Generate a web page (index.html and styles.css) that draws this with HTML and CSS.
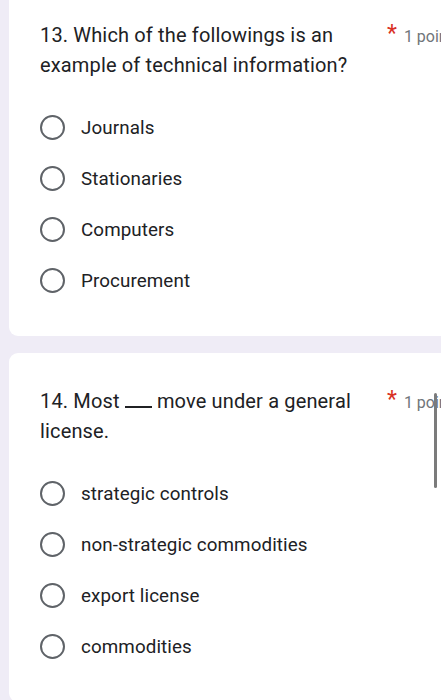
FILE: index.html
```html
<!DOCTYPE html>
<html lang="en">
<head>
<meta charset="utf-8">
<title>Quiz</title>
<link rel="stylesheet" href="styles.css">
</head>
<body>
<main class="form">
  <section class="card card-first">
    <div class="q-head">
      <div class="q-title">13. Which of the followings is an example of technical information?</div>
      <span class="req">*</span>
      <span class="points">1 point</span>
    </div>
    <ul class="options">
      <li class="option"><span class="radio"></span><span class="label">Journals</span></li>
      <li class="option"><span class="radio"></span><span class="label">Stationaries</span></li>
      <li class="option"><span class="radio"></span><span class="label">Computers</span></li>
      <li class="option"><span class="radio"></span><span class="label">Procurement</span></li>
    </ul>
  </section>
  <section class="card">
    <div class="q-head">
      <div class="q-title">14. Most <span class="blank" aria-label="blank"></span> move under a general license.</div>
      <span class="req">*</span>
      <span class="points">1 point</span>
    </div>
    <ul class="options">
      <li class="option"><span class="radio"></span><span class="label">strategic controls</span></li>
      <li class="option"><span class="radio"></span><span class="label">non-strategic commodities</span></li>
      <li class="option"><span class="radio"></span><span class="label">export license</span></li>
      <li class="option"><span class="radio"></span><span class="label">commodities</span></li>
    </ul>
  </section>
</main>
<div class="scrollbar"></div>
</body>
</html>
```
FILE: styles.css
```css
html, body {
  margin: 0;
  padding: 0;
  overflow: hidden;
}
body {
  background: #efecf6;
  font-family: Roboto, "Liberation Sans", sans-serif;
  color: #202124;
  width: 441px;
  height: 700px;
}
.form {
  display: flex;
  flex-direction: column;
  gap: 17px;
  padding-left: 9px;
}
.card {
  background: #ffffff;
  margin-right: -30px;
  border-radius: 9px;
  padding: 33px 0 30px 31px;
}
.card-first {
  padding-top: 20px;
  border-radius: 0 0 9px 9px;
}
.q-head {
  display: flex;
  align-items: baseline;
}
.q-title {
  width: 330px;
  flex: 0 0 330px;
  font-size: 20px;
  line-height: 30px;
  letter-spacing: 0.15px;
}
.blank {
  display: inline-block;
  width: 27px;
  height: 2px;
  background: #202124;
  vertical-align: baseline;
}
.req {
  margin-left: 17px;
  color: #d93025;
  font-size: 23px;
  position: relative;
  top: -1px;
}
.points {
  margin-left: 7px;
  color: #70757a;
  font-size: 16px;
  white-space: nowrap;
}
.options {
  list-style: none;
  margin: 22px 0 0 0;
  padding: 0;
  display: flex;
  flex-direction: column;
}
.option {
  display: flex;
  align-items: center;
  height: 51px;
}
.radio {
  box-sizing: border-box;
  width: 25px;
  height: 25px;
  border: 2.5px solid #5f6368;
  border-radius: 50%;
  flex: 0 0 25px;
}
.label {
  margin-left: 16px;
  font-size: 18.8px;
  letter-spacing: 0.1px;
}
.scrollbar {
  position: fixed;
  left: 434px;
  top: 393px;
  width: 3px;
  height: 95px;
  background: #7b7b7b;
  border-radius: 2px;
}
```
